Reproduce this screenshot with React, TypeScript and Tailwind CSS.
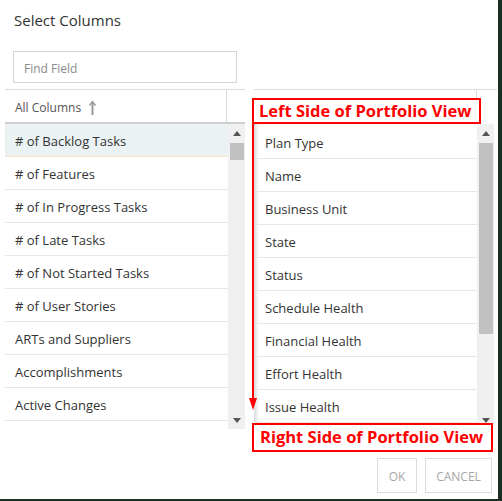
const leftItems = [
  "# of Backlog Tasks",
  "# of Features",
  "# of In Progress Tasks",
  "# of Late Tasks",
  "# of Not Started Tasks",
  "# of User Stories",
  "ARTs and Suppliers",
  "Accomplishments",
  "Active Changes",
];

const rightItems = [
  "Plan Type",
  "Name",
  "Business Unit",
  "State",
  "Status",
  "Schedule Health",
  "Financial Health",
  "Effort Health",
  "Issue Health",
];

const font = { fontFamily: '"Open Sans", "Noto Sans", sans-serif' };

const ArrowUp = () => (
  <svg width="8" height="5" viewBox="0 0 8 5" className="block">
    <path d="M0 5 L4 0 L8 5 Z" fill="#555" />
  </svg>
);

const ArrowDown = () => (
  <svg width="8" height="5" viewBox="0 0 8 5" className="block">
    <path d="M0 0 L4 5 L8 0 Z" fill="#555" />
  </svg>
);

const Scrollbar = ({ thumbTop, thumbHeight }: { thumbTop: number; thumbHeight: number }) => (
  <div className="w-[17px] h-full bg-[#f0f0f0] flex flex-col items-center">
    <div className="h-[18px] flex items-center justify-center">
      <ArrowUp />
    </div>
    <div className="flex-1 w-full px-[2px] relative">
      <div
        className="absolute left-[2px] right-[1px] bg-[#c1c1c1]"
        style={{ top: thumbTop, height: thumbHeight }}
      />
    </div>
    <div className="h-[18px] flex items-center justify-center">
      <ArrowDown />
    </div>
  </div>
);

const App = () => {
  return (
    <div className="w-[502px] h-[501px] bg-[#1b2f24] overflow-hidden" style={font}>
      <div className="relative w-[498px] h-[499px] bg-white">
        <div className="pl-[14px] pt-[9px] text-[15px] leading-[22px] text-[#333]">Select Columns</div>

        <div className="ml-[13px] mt-[20px] w-[224px] h-[32px] border border-[#d4d4d4] flex items-center pl-[10px] pt-[3px] text-[12px] text-[#8a8a8a]">
          Find Field
        </div>

        <div className="flex mt-[6px]">
          {/* left list */}
          <div className="ml-[5px] w-[240px]">
            <div className="h-[35px] border-t border-[#dcdcdc] border-b-[2px] border-b-[#cfcfcf] flex">
              <div className="w-[222px] border-r border-[#dcdcdc] flex items-center pl-[10px] pt-[3px] gap-[8px] text-[12px] text-[#555]">
                All Columns
                <svg width="7" height="14" viewBox="0 0 7 14">
                  <path d="M3.5 1 L3.5 14" stroke="#999" strokeWidth="2" />
                  <path d="M0.5 4.5 L3.5 0.5 L6.5 4.5" stroke="#999" strokeWidth="1.5" fill="none" />
                </svg>
              </div>
            </div>
            <div className="flex h-[305px]">
              <div className="w-[223px]">
                {leftItems.map((item, i) => (
                  <div
                    key={item}
                    className={`h-[33px] flex items-center pl-[10px] pt-[3px] text-[13px] text-[#333] border-b ${
                      i === 0 ? "bg-[#ebf2f4] border-b-[#f3e6c4]" : "border-b-[#e6e6e6]"
                    }`}
                  >
                    {item}
                  </div>
                ))}
              </div>
              <Scrollbar thumbTop={1} thumbHeight={17} />
            </div>
          </div>

          {/* right list */}
          <div className="ml-[9px] w-[243px]">
            <div className="h-[35px] border-t border-[#dcdcdc] flex">
              <div className="w-[223px] border-r border-[#dcdcdc]" />
            </div>
            <div className="flex h-[305px]">
              <div className="w-[223px] pt-[2px] shadow-[inset_4px_0_4px_-2px_rgba(0,0,0,0.18)]">
                {rightItems.map((item) => (
                  <div
                    key={item}
                    className="h-[33px] flex items-center pl-[11px] pt-[3px] text-[13px] text-[#333] border-b border-[#e6e6e6]"
                  >
                    {item}
                  </div>
                ))}
              </div>
              <Scrollbar thumbTop={1} thumbHeight={191} />
            </div>
          </div>
        </div>

        <div className="flex justify-end gap-[8px] mt-[29px] pr-[6px]">
          <button className="w-[40px] h-[35px] border border-[#dcdcdc] pt-[2px] text-[12px] text-[#a6a6a6]">OK</button>
          <button className="w-[67px] h-[35px] border border-[#dcdcdc] pt-[2px] text-[12px] text-[#a6a6a6]">CANCEL</button>
        </div>

        {/* annotations */}
        <div className="absolute left-[252px] top-[98px] w-[229px] h-[26px] border-2 border-[#f00] bg-white flex items-center pl-[5px] text-[16.5px] font-bold text-[#f00] leading-none">
          Left Side of Portfolio View
        </div>
        <div className="absolute left-[252px] top-[124px] w-[2px] h-[276px] bg-[#f00]" />
        <svg className="absolute left-[249px] top-[398px]" width="8" height="12" viewBox="0 0 8 12">
          <path d="M0 0 L4 12 L8 0 Z" fill="#f00" />
        </svg>
        <div className="absolute left-[252px] top-[423px] w-[241px] h-[29px] border-2 border-[#f00] bg-white flex items-center pl-[6px] text-[16.5px] font-bold text-[#f00] leading-none">
          Right Side of Portfolio View
        </div>
      </div>
    </div>
  );
};

export default App;
